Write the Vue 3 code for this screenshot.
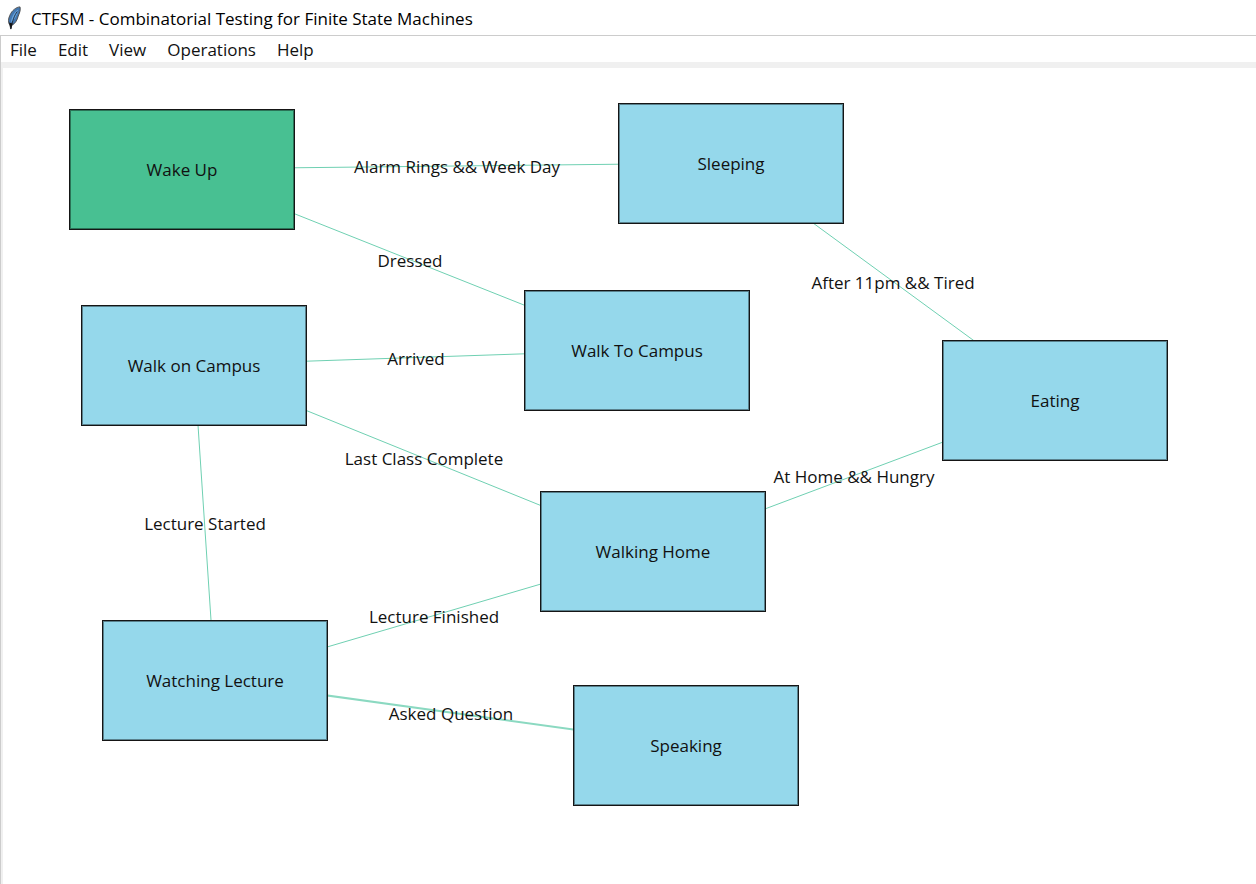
<script setup>
const NODE_W = 226
const NODE_H = 121
const LABEL_W = 240
const LABEL_H = 26

const menus = ['File', 'Edit', 'View', 'Operations', 'Help']

// Centre of each state, in canvas coordinates
const states = {
  wake: { name: 'Wake Up', x: 179, y: 101, start: true },
  sleeping: { name: 'Sleeping', x: 728, y: 95 },
  toCampus: { name: 'Walk To Campus', x: 634, y: 282 },
  onCampus: { name: 'Walk on Campus', x: 191, y: 297 },
  eating: { name: 'Eating', x: 1052, y: 332 },
  home: { name: 'Walking Home', x: 650, y: 483 },
  lecture: { name: 'Watching Lecture', x: 212, y: 612 },
  speaking: { name: 'Speaking', x: 683, y: 677 },
}

const transitions = [
  ['wake', 'sleeping', 'Alarm Rings && Week Day'],
  ['wake', 'toCampus', 'Dressed'],
  ['sleeping', 'eating', 'After 11pm && Tired'],
  ['toCampus', 'onCampus', 'Arrived'],
  ['onCampus', 'home', 'Last Class Complete'],
  ['eating', 'home', 'At Home && Hungry'],
  ['onCampus', 'lecture', 'Lecture Started'],
  ['lecture', 'home', 'Lecture Finished'],
  ['lecture', 'speaking', 'Asked Question', true],
].map(([from, to, label, both]) => ({ a: states[from], b: states[to], label, both }))

const nodeStyle = (s) => ({
  left: `${s.x - NODE_W / 2}px`,
  top: `${s.y - Math.floor(NODE_H / 2)}px`,
  width: `${NODE_W}px`,
  height: `${NODE_H}px`,
})

const labelStyle = ({ a, b }) => ({
  left: `${Math.round((a.x + b.x) / 2) - LABEL_W / 2}px`,
  top: `${Math.ceil((a.y + b.y) / 2) - LABEL_H / 2}px`,
  width: `${LABEL_W}px`,
  height: `${LABEL_H}px`,
})
</script>

<template>
  <div class="window">
    <header class="titlebar">
      <svg class="feather" viewBox="0 0 16 26" aria-hidden="true">
        <path d="M14 1 C10 1 5 5 3 10 C1 14 1 18 3 21 L4 25 L5 21 C9 19 11 15 12 11 C13 8 15 5 14 1 Z" fill="#4377b0" stroke="#4a4a4a" stroke-width="1" />
        <path d="M12 4 C8 6 5 11 4 18 C8 15 11 10 12 4 Z" fill="#69a5e0" />
        <path d="M11 6 C8 10 6 15 4 25" fill="none" stroke="#1d2733" stroke-width="1" />
        <path d="M2 18 L4 25 L6 19 Z" fill="#151515" />
      </svg>
      <h1 class="title">CTFSM - Combinatorial Testing for Finite State Machines</h1>
    </header>
    <div class="client">
      <nav class="menubar" aria-label="Main menu">
        <button v-for="m in menus" :key="m" type="button" class="menu">{{ m }}</button>
      </nav>
      <main class="canvas">
        <svg class="edges" aria-hidden="true">
          <line
            v-for="t in transitions"
            :key="t.label"
            :x1="t.a.x"
            :y1="t.a.y"
            :x2="t.b.x"
            :y2="t.b.y"
            :class="{ both: t.both }"
          />
        </svg>
        <div v-for="t in transitions" :key="t.label" class="label" :style="labelStyle(t)">{{ t.label }}</div>
        <div
          v-for="s in states"
          :key="s.name"
          class="node"
          :class="{ start: s.start }"
          :style="nodeStyle(s)"
        >{{ s.name }}</div>
      </main>
    </div>
  </div>
</template>

<style>
body {
  margin: 0;
  background: #fff;
}
</style>

<style scoped>
.window {
  display: flex;
  flex-direction: column;
  min-height: 100vh;
  background: #fff;
  color: #111;
  font-family: "Open Sans", "Noto Sans", sans-serif;
  font-size: 17px;
  line-height: 24px;
}
.titlebar {
  display: flex;
  align-items: center;
  gap: 9px;
  height: 35px;
  padding: 0 7px;
  box-sizing: border-box;
}
.feather {
  flex: none;
  width: 15px;
  height: 24px;
}
.title {
  margin: 0;
  padding-top: 2px;
  color: #000;
  font-size: 17px;
  font-weight: 400;
  white-space: nowrap;
}
.client {
  display: flex;
  flex: 1;
  flex-direction: column;
  border-top: 1px solid #ccc;
  border-left: 1px solid #ccc;
}
.menubar {
  display: flex;
  gap: 21px;
  height: 26px;
  padding-left: 9px;
}
.menu {
  padding: 2px 0 0;
  border: 0;
  background: none;
  color: #111;
  font: inherit;
}
.canvas {
  position: relative;
  flex: 1;
  min-height: 760px;
  overflow: hidden;
  border-top: 6px solid #f0f0f0;
  border-left: 2px solid #f0f0f0;
}
.edges {
  position: absolute;
  inset: 0;
  width: 100%;
  height: 100%;
}
.edges line {
  stroke: #6fd0b2;
  stroke-width: 1px;
}
.edges line.both {
  stroke: #8bd9c1;
  stroke-width: 2px;
}
.label {
  position: absolute;
  display: flex;
  align-items: flex-end;
  justify-content: center;
  white-space: nowrap;
}
.node {
  position: absolute;
  display: flex;
  align-items: center;
  justify-content: center;
  box-sizing: border-box;
  padding-top: 1px;
  border: 1px solid #151515;
  box-shadow: inset 0 0 0 1px rgb(0 0 0 / 40%);
  background: #95d8eb;
  white-space: nowrap;
}
.node.start {
  background: #48c092;
}
</style>
